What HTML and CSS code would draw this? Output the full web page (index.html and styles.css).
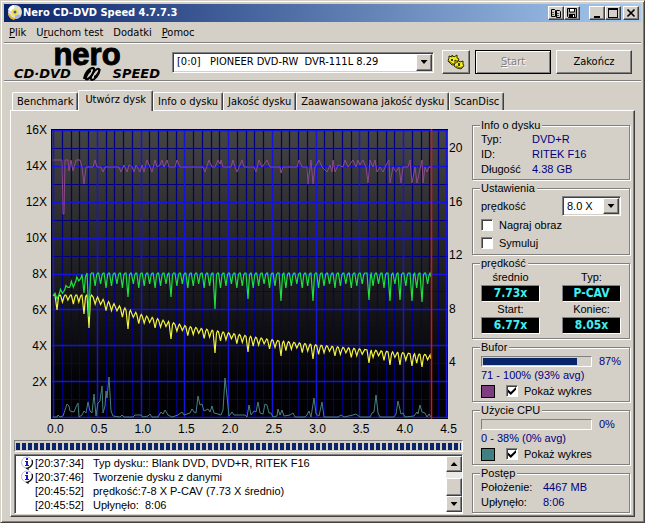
FILE: index.html
```html
<!DOCTYPE html>
<html lang="pl">
<head>
<meta charset="utf-8">
<title>Nero CD-DVD Speed 4.7.7.3</title>
<link rel="stylesheet" href="styles.css">
</head>
<body>
<div class="window">
  <header class="titlebar">
    <svg class="app-icon" viewBox="0 0 16 16" aria-hidden="true">
      <circle cx="8" cy="7" r="7" fill="#d9dde6"/>
      <path d="M8 7 1 5a7 7 0 0 1 6-5z" fill="#fff"/>
      <path d="M8 7 14 11a7 7 0 0 1-6 3z" fill="#a9b5d6"/>
      <circle cx="8" cy="7" r="3.500" fill="#f2e24a"/>
      <circle cx="8" cy="7" r="1.500" fill="#4a5a8c"/>
      <path d="M1 9q1 5 6 6l2-2q-5 0-6-4z" fill="#e8b820"/>
      <path d="M10 2q4 2 4 6l-2-1q0-3-3-4z" fill="#efe7a0"/>
    </svg>
    <h1 class="title">Nero CD-DVD Speed 4.7.7.3</h1>
    <div class="title-buttons">
      <button class="tb" aria-label="Kopiuj"><svg viewBox="0 0 12 10"><path d="M1.500 1.500h3l1 1v6h-4zM6.500 2.500h3l1 1v6h-4z" fill="#d4d0c8" stroke="#000"/><path d="M2 4.500h2M2 6.500h2M7 5.500h2M7 7.500h2" stroke="#555"/></svg></button>
      <button class="tb" aria-label="Zapisz"><svg viewBox="0 0 12 10"><path d="M1.500.5h9v9h-8l-1-1z" fill="#aaa" stroke="#000"/><path d="M3.500 1v3h5V1" fill="#fff" stroke="#000"/><path d="M3 6h6v3H3z"/><path d="M7 7h1v2H7z" fill="#fff"/></svg></button>
      <button class="tb tb-gap" aria-label="Minimalizuj"><svg viewBox="0 0 12 10"><path d="M3 8h6v2H3z"/></svg></button>
      <button class="tb" aria-label="Maksymalizuj"><svg viewBox="0 0 12 10"><path d="M1 0h10v10H1zM2 2v7h8V2z" fill-rule="evenodd"/></svg></button>
      <button class="tb tb-close" aria-label="Zamknij"><svg viewBox="0 0 12 10"><path d="M2.500 1.500 9.500 8.500M9.500 1.500 2.500 8.500" stroke="#000" stroke-width="1.700"/></svg></button>
    </div>
  </header>

  <nav class="menu">
    <a href="#"><u>P</u>lik</a>
    <a href="#">U<u>r</u>uchom test</a>
    <a href="#">Dodatki</a>
    <a href="#"><u>P</u>omoc</a>
  </nav>

  <div class="toolbar">
    <div class="logo">
      <div class="logo-name">nero</div>
      <div class="logo-sub"><span>CD·DVD</span>
        <svg viewBox="0 0 18 14" aria-hidden="true"><path d="M1 12C2 6 6 1 10 1c2 0 1 4-1 7s-5 5-6 4c-1-2 3-8 5-8" fill="none" stroke="#000" stroke-width="2.200"/><path d="M17 2c-1 6-5 11-8 11-2 0-1-4 1-7s5-5 6-4c1 2-3 8-5 8" fill="none" stroke="#000" stroke-width="1.800"/></svg>
        <span>SPEED</span></div>
    </div>
    <div class="combo combo-drive">
      <select aria-label="Napęd"><option>[0:0]&nbsp;&nbsp; PIONEER DVD-RW&nbsp; DVR-111L 8.29</option></select>
      <span class="arrow"></span>
    </div>
    <button class="btn btn-icon" aria-label="Opcje"><svg viewBox="0 0 18 16"><path d="M2 4V2l3 1V1l2 2 3-2v3l2 1-2 5-5 1-4-4z" fill="#f4ec20" stroke="#2a2800"/><path d="M8 9V6l3 2V6l2 2 3-1v3l1 2-3 3-4-1-3-2z" fill="#f4ec20" stroke="#2a2800"/><path d="M2 7l4 3 5-2M9 12l4 2 4-2" fill="none" stroke="#6b6400"/><path d="M5 5v2M12 9v3" stroke="#000" stroke-width="1.500"/></svg></button>
    <button class="btn btn-default" disabled><u>S</u>tart</button>
    <button class="btn">Zakończ</button>
  </div>

  <main class="content">
    <div class="tabs" role="tablist">
      <button class="tab" role="tab">Benchmark</button>
      <button class="tab tab-active" role="tab" aria-selected="true">Utwórz dysk</button>
      <button class="tab" role="tab">Info o dysku</button>
      <button class="tab" role="tab">Jakość dysku</button>
      <button class="tab" role="tab">Zaawansowana jakość dysku</button>
      <button class="tab" role="tab">ScanDisc</button>
    </div>
    <div class="page">
      <section class="left">
        <div class="chart">
          <div class="axis axis-left"><span>16X</span><span>14X</span><span>12X</span><span>10X</span><span>8X</span><span>6X</span><span>4X</span><span>2X</span></div>
          <svg class="plot" viewBox="51 129 397 290" preserveAspectRatio="none" role="img" aria-label="Wykres prędkości">
            <defs><linearGradient id="bg" x1="0" y1="0" x2="0" y2="1"><stop offset="0" stop-color="#444"/><stop offset=".85" stop-color="#040404"/><stop offset="1" stop-color="#000"/></linearGradient></defs>
            <rect x="51" y="129" width="397" height="290" fill="url(#bg)"/>
            <g id="grid"></g>
            <g id="series"></g>
          </svg>
          <div class="axis axis-right"><span>20</span><span>16</span><span>12</span><span>8</span><span>4</span></div>
          <div class="axis axis-bottom"><span>0.0</span><span>0.5</span><span>1.0</span><span>1.5</span><span>2.0</span><span>2.5</span><span>3.0</span><span>3.5</span><span>4.0</span><span>4.5</span></div>
        </div>
        <div class="strip" role="progressbar" aria-label="Postęp" aria-valuenow="100"><div class="strip-fill"></div></div>
        <div class="log">
          <ul class="log-list">
            <li><svg viewBox="0 0 14 14"><circle cx="7" cy="6.500" r="5.500" fill="#fff" stroke="#bbb"/><path d="M12 4a6 6 0 0 1-4 8v1l-2-1" fill="none" stroke="#111" stroke-width="1.300"/><path d="M6 2h2v2H6zM5 5h3v4h1v1H5V9h1V6H5z" fill="#1818d0"/></svg><time>[20:37:34]</time><span>Typ dysku:: Blank DVD, DVD+R, RITEK F16</span></li>
            <li><svg viewBox="0 0 14 14"><circle cx="7" cy="6.500" r="5.500" fill="#fff" stroke="#bbb"/><path d="M12 4a6 6 0 0 1-4 8v1l-2-1" fill="none" stroke="#111" stroke-width="1.300"/><path d="M6 2h2v2H6zM5 5h3v4h1v1H5V9h1V6H5z" fill="#1818d0"/></svg><time>[20:37:46]</time><span>Tworzenie dysku z danymi</span></li>
            <li><i></i><time>[20:45:52]</time><span>prędkość:7-8 X P-CAV (7.73 X średnio)</span></li>
            <li><i></i><time>[20:45:52]</time><span>Upłynęło:&nbsp; 8:06</span></li>
          </ul>
          <div class="scrollbar">
            <button class="sb" aria-label="W górę"><span class="up"></span></button>
            <div class="thumb"></div>
            <button class="sb" aria-label="W dół"><span class="down"></span></button>
          </div>
        </div>
      </section>

      <aside class="side">
        <fieldset>
          <legend>Info o dysku</legend>
          <dl class="facts">
            <dt>Typ:</dt><dd>DVD+R</dd>
            <dt>ID:</dt><dd>RITEK F16</dd>
            <dt>Długość</dt><dd>4.38 GB</dd>
          </dl>
        </fieldset>
        <fieldset>
          <legend>Ustawienia</legend>
          <div class="setting"><label for="speed">prędkość</label>
            <div class="combo combo-speed"><select id="speed"><option>8.0 X</option></select><span class="arrow"></span></div>
          </div>
          <label class="check"><input type="checkbox">Nagraj obraz</label>
          <label class="check"><input type="checkbox">Symuluj</label>
        </fieldset>
        <fieldset>
          <legend>prędkość</legend>
          <div class="speeds">
            <div><p>średnio</p><output>7.73x</output></div>
            <div><p>Typ:</p><output>P-CAV</output></div>
            <div><p>Start:</p><output>6.77x</output></div>
            <div><p>Koniec:</p><output>8.05x</output></div>
          </div>
        </fieldset>
        <fieldset>
          <legend>Bufor</legend>
          <div class="meter"><div class="bar" role="progressbar" aria-label="Bufor" aria-valuenow="87"><div class="bar-fill" style="width:88%"></div></div><span>87%</span></div>
          <p class="range">71 - 100% (93% avg)</p>
          <div class="show"><i class="swatch swatch-buffer"></i><label class="check"><input type="checkbox" checked>Pokaż wykres</label></div>
        </fieldset>
        <fieldset>
          <legend>Użycie CPU</legend>
          <div class="meter"><div class="bar" role="progressbar" aria-label="CPU" aria-valuenow="0"></div><span>0%</span></div>
          <p class="range">0 - 38% (0% avg)</p>
          <div class="show"><i class="swatch swatch-cpu"></i><label class="check"><input type="checkbox" checked>Pokaż wykres</label></div>
        </fieldset>
        <fieldset>
          <legend>Postęp</legend>
          <dl class="facts facts-wide">
            <dt>Położenie:</dt><dd>4467 MB</dd>
            <dt>Upłynęło:</dt><dd>8:06</dd>
          </dl>
        </fieldset>
      </aside>
    </div>
  </main>
</div>
<script src="chart.js"></script>
</body>
</html>
```
FILE: styles.css
```css
* { box-sizing: border-box; }

body {
  margin: 0;
  background: #d4d0c8;
  color: #000;
  font: 11px/14px "DejaVu Sans Condensed", "Liberation Sans", sans-serif;
}

button, select, input { font: inherit; color: inherit; margin: 0; }
button { padding: 0; }
p, dl, dd, ul, h1 { margin: 0; padding: 0; }

.window {
  display: flex;
  flex-direction: column;
  min-height: 100vh;
  padding: 3px;
  background: #d4d0c8;
  border: 1px solid #d4d0c8;
  border-right-color: #404040;
  border-bottom-color: #404040;
  box-shadow: inset 1px 1px 0 #fff, inset -1px -1px 0 #808080;
}

/* title bar */
.titlebar {
  display: flex;
  align-items: center;
  height: 18px;
  padding: 0 2px 0 3px;
  background: linear-gradient(to right, #0a246a, #a6caf0);
}
.app-icon { width: 16px; height: 16px; }
.title {
  flex: 1;
  color: #fff;
  font-size: 11px;
  font-weight: bold;
}
.title-buttons { display: flex; }
.tb {
  width: 16px;
  height: 14px;
  display: flex;
  align-items: center;
  justify-content: center;
  background: #d4d0c8;
  border: 1px solid;
  border-color: #fff #404040 #404040 #fff;
  box-shadow: inset -1px -1px 0 #808080;
}
.tb svg { width: 12px; height: 10px; }
.tb-gap { margin-left: 9px; }
.tb-close { margin-left: 2px; }

.menu {
  display: flex;
  gap: 10px;
  height: 20px;
  align-items: center;
  padding: 1px 0 0 5px;
}
.menu a { color: #000; text-decoration: none; }

/* toolbar */
.toolbar {
  display: flex;
  align-items: center;
  height: 40px;
  padding: 0 9px 0 10px;
  border-top: 1px solid #808080;
  border-bottom: 1px solid #fff;
  box-shadow: inset 0 1px 0 #fff, inset 0 -1px 0 #808080;
}
.logo { width: 146px; margin-right: 12px; }
.logo-name {
  text-align: center;
  font: bold 31px/24px "Liberation Sans", sans-serif;
  height: 24px;
  -webkit-text-stroke: 1px #000;
}
.logo-sub {
  display: flex;
  align-items: center;
  justify-content: space-between;
  font: italic bold 13px/14px "DejaVu Sans", sans-serif;
}
.logo-sub svg { width: 18px; height: 14px; }

.combo {
  position: relative;
  display: flex;
  height: 21px;
  padding: 1px;
  background: #fff;
  border: 1px solid;
  border-color: #808080 #fff #fff #808080;
  box-shadow: inset 1px 1px 0 #404040, inset -1px -1px 0 #d4d0c8;
}
.combo select {
  flex: 1;
  width: 100%;
  appearance: none;
  background: transparent;
  border: 0;
  padding: 0 3px;
}
.combo-drive { flex: 1; margin-right: 8px; }
.arrow {
  position: absolute;
  top: 1px;
  right: 1px;
  bottom: 1px;
  width: 16px;
  display: flex;
  align-items: center;
  justify-content: center;
  pointer-events: none;
}
.arrow, .sb, .thumb {
  background: #d4d0c8;
  border: 1px solid;
  border-color: #fff #404040 #404040 #fff;
  box-shadow: inset -1px -1px 0 #808080;
}
.arrow::after, .up, .down {
  content: "";
  width: 7px;
  height: 4px;
  background: #000;
  clip-path: polygon(0 0, 100% 0, 50% 100%);
}
.up { clip-path: polygon(0 100%, 100% 100%, 50% 0); }

.btn {
  width: 76px;
  height: 24px;
  background: #d4d0c8;
  border: 1px solid;
  border-color: #fff #404040 #404040 #fff;
  box-shadow: inset -1px -1px 0 #808080;
}
.btn + .btn { margin-left: 5px; }
.btn-icon {
  width: 28px;
  display: flex;
  align-items: center;
  justify-content: center;
}
.btn-icon svg { width: 18px; height: 16px; }
.btn-default {
  border-color: #000;
  box-shadow: inset 1px 1px 0 #fff, inset -1px -1px 0 #808080;
}
.btn:disabled { color: #808080; text-shadow: 1px 1px 0 #fff; }

/* tabs */
.content {
  flex: 1;
  display: flex;
  flex-direction: column;
  padding: 8px 6px 2px;
}
.tabs {
  display: flex;
  align-items: flex-end;
  padding-left: 2px;
}
.tab {
  height: 18px;
  padding: 0 4px;
  background: #d4d0c8;
  border: 1px solid;
  border-color: #fff #404040 transparent #fff;
  border-bottom: 0;
  border-radius: 2px 2px 0 0;
  box-shadow: inset -1px 0 0 #808080;
  white-space: nowrap;
}
.tab-active {
  position: relative;
  height: 21px;
  padding: 0 6px 2px;
  margin-bottom: -1px;
}

.page {
  flex: 1;
  display: flex;
  gap: 9px;
  padding: 8px 4px 2px 3px;
  border: 1px solid;
  border-color: #fff #404040 #404040 #fff;
  box-shadow: inset -1px -1px 0 #808080;
}
.left { flex: 1; min-width: 0; display: flex; flex-direction: column; }

/* chart */
.chart {
  flex: 1;
  display: grid;
  grid-template-columns: 37px 1fr 15px;
  grid-template-rows: 290px 1fr;
  padding-top: 10px;
  font: 12px/14px "Liberation Sans", sans-serif;
}
.axis { display: flex; justify-content: space-between; }
.axis-left {
  flex-direction: column;
  text-align: right;
  height: 266px;
  margin-top: -6px;
  padding-right: 4px;
}
.axis-right {
  flex-direction: column;
  height: 228px;
  margin-top: 12px;
  padding-left: 1px;
}
.axis-bottom {
  grid-column: 1 / -1;
  padding: 3px 6px 0 33px;
}
.plot { width: 100%; height: 290px; display: block; }

/* block progress */
.strip {
  height: 12px;
  padding: 2px 1px;
  border: 1px solid;
  border-color: #808080 #fff #fff #808080;
}
.strip-fill {
  height: 7px;
  background: repeating-linear-gradient(to right, #0a246a 0 4px, #d4d0c8 4px 6px);
}

/* event log */
.log {
  display: flex;
  height: 60px;
  margin-top: 2px;
  background: #fff;
  border: 1px solid;
  border-color: #808080 #fff #fff #808080;
  box-shadow: inset 1px 1px 0 #404040;
  font: 11px/14px "Liberation Sans", sans-serif;
}
.log-list { flex: 1; list-style: none; padding: 1px 0 0 5px; }
.log-list li { display: flex; height: 14px; }
.log-list svg, .log-list i { width: 14px; height: 14px; margin-right: 1px; }
.log-list time { width: 58px; }
.scrollbar {
  width: 16px;
  display: flex;
  flex-direction: column;
  justify-content: space-between;
  margin: 1px 0;
  background: #ebe9e5;
}
.sb {
  height: 16px;
  display: flex;
  align-items: center;
  justify-content: center;
}
.thumb { height: 18px; margin-top: auto; }
.scrollbar .sb, .thumb { width: 100%; }

/* side panel */
.side {
  width: 158px;
  display: flex;
  flex-direction: column;
  gap: 2px;
  font: 11px/15px "Liberation Sans", sans-serif;
}
fieldset {
  min-width: 0;
  margin: 0;
  padding: 0 8px 2px;
  border: 1px solid #808080;
  box-shadow: 1px 1px 0 #fff, inset 1px 1px 0 #fff;
}
legend {
  height: 13px;
  padding: 0 2px 0 1px;
  margin-left: -1px;
  line-height: 13px;
  background: #d4d0c8;
}
.facts {
  display: grid;
  grid-template-columns: 51px 1fr;
}
.facts-wide { grid-template-columns: 62px 1fr; }
.facts dd, .meter span, .range { color: #000080; }

.setting {
  display: flex;
  justify-content: space-between;
  align-items: center;
  padding-top: 1px;
}
.combo-speed { width: 59px; height: 20px; }
.check { display: flex; align-items: center; height: 18px; }
.check input {
  appearance: none;
  width: 12px;
  height: 12px;
  margin-right: 6px;
  background: #fff;
  border: 1px solid;
  border-color: #808080 #fff #fff #808080;
  box-shadow: inset 1px 1px 0 #404040;
}
.check input:checked::after {
  content: "";
  display: block;
  width: 8px;
  height: 8px;
  margin: 1px;
  background: #000;
  clip-path: polygon(0 30%, 35% 62%, 100% 0, 100% 35%, 35% 100%, 0 65%);
}

.speeds {
  display: grid;
  grid-template-columns: 59px 59px;
  justify-content: space-between;
  padding-bottom: 2px;
  text-align: center;
}
.speeds output {
  display: block;
  height: 17px;
  background: #000;
  color: #40f0f0;
  border: 1px solid;
  border-color: #808080 #fff #fff #808080;
  font: bold 12px/15px "DejaVu Sans Condensed", sans-serif;
}
.meter { display: flex; align-items: center; gap: 7px; height: 14px; }
.bar {
  width: 111px;
  height: 11px;
  padding: 1px;
  border: 1px solid;
  border-color: #808080 #fff #fff #808080;
}
.bar-fill { height: 7px; background: #0a246a; }
.show { display: flex; align-items: center; gap: 11px; height: 16px; }
.swatch { width: 14px; height: 13px; border: 1px solid #000; }
.swatch-buffer { background: #803c80; }
.swatch-cpu { background: #408080; }
```
FILE: chart.js
```js
const NS = "http://www.w3.org/2000/svg";
const grid = document.getElementById("grid");
const series = document.getElementById("series");

function add(parent, tag, attrs) {
  const el = document.createElementNS(NS, tag);
  for (const key in attrs) el.setAttribute(key, attrs[key]);
  parent.appendChild(el);
}

// Grid: fine lines first, labelled lines on top.
for (const major of [false, true]) {
  const style = { stroke: major ? "#1414dc" : "#000080", "stroke-width": major ? 1.5 : 1.2 };
  for (let i = 0; i <= 45; i++) {
    if ((i % 5 === 0) !== major) continue;
    const x = Math.round(53 + i * 8.75) + 0.5 - (i === 45 ? 1 : 0);
    add(grid, "path", { d: `M${x} 130V419`, ...style });
  }
  for (let i = 0; i <= 16; i++) {
    if ((i % 2 === 0) !== major) continue;
    const y = Math.round(130 + i * 18) + 0.5 - (i > 8 ? 1 : 0);
    add(grid, "path", { d: `M51 ${y}H448`, ...style });
  }
}
add(grid, "path", { d: "M51 129.5H448M51.5 129V419M51 418.5H448", stroke: "#000010" });

function interpolate(points, x) {
  for (let i = 1; i < points.length; i++) {
    const [x0, y0] = points[i - 1], [x1, y1] = points[i];
    if (x <= x1) return y0 + (y1 - y0) * (x - x0) / (x1 - x0);
  }
  return points[points.length - 1][1];
}

// A line along `top` with regular short dips and a few named deep ones.
function comb(top, deep, depth, color) {
  let d = `M53 ${top[0][1]}`;
  let n = 0;
  for (let x = 57; x < 430; x += 5.45, n++) {
    const hit = deep.find(p => Math.abs(p[0] - x) < 2.7);
    const px = hit ? hit[0] : x;
    const y = interpolate(top, px);
    const low = hit ? hit[1] : y + depth(px) - (n % 3) * 2;
    d += `L${px - 2} ${y}L${px} ${low}L${px + 1.5} ${y + 2}L${px + 2.5} ${y}`;
  }
  add(series, "path", { d: d + `L431 ${interpolate(top, 431) + 4}`, fill: "none", stroke: color, "stroke-width": 1.2 });
}

function line(points, color) {
  add(series, "polyline", { points, fill: "none", stroke: color });
}

// Buffer level
line("53,160 62,160 63,214 64,214 65,160 68,160 69,171 71,160 73,171 76,160 80,160 82,167 84,184 86,167 93,167 95,160 97,167 101,167 103,172 105,167 119,167 121,172 124,165 127,172 129,165 132,167 134,172 136,165 140,172 142,165 144,172 147,160 150,167 152,172 155,160 157,167 160,165 162,160 164,167 167,160 169,167 175,167 177,160 180,167 203,167 205,172 209,160 212,167 215,167 218,160 220,164 221,160 223,167 231,167 233,160 235,167 237,172 242,160 244,167 254,167 256,172 259,160 262,167 267,160 270,167 280,167 281,173 283,167 297,167 299,160 302,167 307,167 308,184 311,160 313,184 315,167 319,160 322,167 327,172 330,165 332,172 333,160 335,172 338,165 343,167 345,160 348,167 353,160 356,167 358,160 360,165 363,160 366,167 368,183 370,160 373,167 375,160 377,172 380,167 383,172 386,165 389,160 390,183 393,167 396,172 399,167 401,183 403,167 408,167 410,160 412,183 415,167 417,183 422,160 423,183 425,167 427,172 429,167 431,167", "#8c4a8c");

// CPU usage
line("53,417 57,417 58,415 60,417 63,416 65,410 67,404 69,406 70,411 74,412 76,407 78,403 79,417 82,415 84,411 86,413 88,402 90,411 92,413 94,394 96,416 98,403 100,401 102,386 103,413 105,406 106,391 107,398 109,377 111,411 113,416 120,417 122,415 124,417 133,417 135,415 141,415 143,417 148,416 150,414 152,417 158,417 161,412 163,414 165,410 168,415 172,417 178,415 182,412 184,415 190,413 192,409 194,412 196,413 198,396 200,405 202,404 204,411 208,409 210,412 212,406 214,413 218,414 221,415 223,410 225,378 227,396 229,416 232,412 234,415 245,415 247,417 249,405 251,415 254,411 256,412 258,402 260,413 263,414 265,404 267,405 269,413 271,413 273,417 277,416 278,409 280,415 282,410 284,416 290,415 293,413 295,417 305,417 307,415 309,411 311,417 314,398 316,414 319,416 322,402 324,417 338,417 341,415 344,417 353,415 356,414 360,417 370,417 372,413 374,412 376,395 378,413 380,417 394,417 396,414 398,401 401,414 403,413 405,417 414,416 417,412 418,414 420,405 422,412 425,413 427,417 429,414 431,417", "#4a8080");

// Rotation speed
comb([[53, 295], [91, 295], [97, 298], [140, 315], [184, 326], [227, 333], [271, 340], [315, 345], [358, 349], [402, 353], [431, 355]],
  [[57, 310], [84, 314], [89, 328], [128, 329], [171, 339], [215, 353], [248, 352], [281, 356], [313, 359], [369, 363], [390, 365], [400, 365], [412, 366], [422, 367]],
  () => 9, "#f4f440");

// Write speed
comb([[53, 296], [60, 291], [70, 284], [80, 276], [88, 273], [431, 273]],
  [[84, 293], [89, 317], [128, 297], [171, 297], [215, 309], [248, 299], [281, 301], [313, 301], [369, 300], [390, 301], [400, 300], [412, 301], [422, 302]],
  x => x < 85 ? 6 : 15, "#20e040");

// Current position
add(series, "path", { d: "M431.5 129V419", stroke: "#e01010", "stroke-width": 1.5 });
```
